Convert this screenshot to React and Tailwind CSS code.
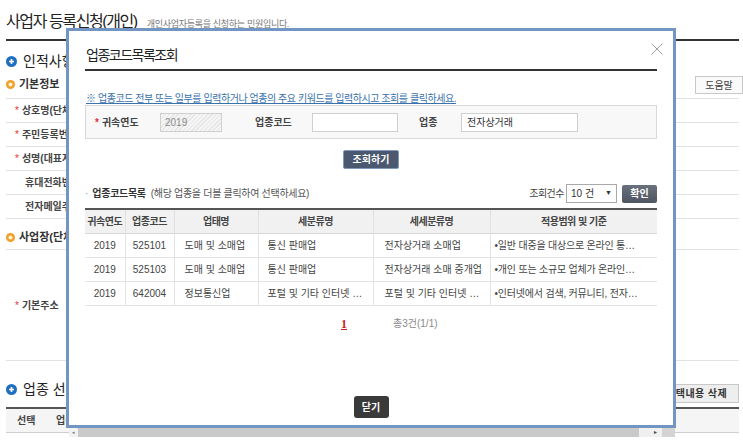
import React from 'react';

const results = [
  { year: '2019', code: '525101', biz: '도매 및 소매업', sub: '통신 판매업', subsub: '전자상거래 소매업', scope: '•일반 대중을 대상으로 온라인 통…' },
  { year: '2019', code: '525103', biz: '도매 및 소매업', sub: '통신 판매업', subsub: '전자상거래 소매 중개업', scope: '•개인 또는 소규모 업체가 온라인…' },
  { year: '2019', code: '642004', biz: '정보통신업', sub: '포털 및 기타 인터넷 …', subsub: '포털 및 기타 인터넷 …', scope: '•인터넷에서 검색, 커뮤니티, 전자…' },
];

const basicRows = [
  { label: '상호명(단체명)', required: true },
  { label: '주민등록번호', required: true },
  { label: '성명(대표자)', required: true },
  { label: '휴대전화번호' },
  { label: '전자메일주소' },
];

const BlueDot = () => (
  <svg width="11" height="11" viewBox="0 0 11 11" className="shrink-0">
    <circle cx="5.5" cy="5.5" r="5.5" fill="#1f6fc1" />
    <path d="M5.5 3v5M3 5.5h5" stroke="#fff" strokeWidth="1.6" />
  </svg>
);

const OrangeDot = () => (
  <svg width="9" height="9" viewBox="0 0 9 9" className="shrink-0">
    <circle cx="4.5" cy="4.5" r="4.5" fill="#f0a02a" />
    <circle cx="4.5" cy="4.5" r="2" fill="#fff1d2" />
  </svg>
);

const Star = () => <span className="text-[#e03434] text-[10px] mr-[3px]">*</span>;

export default function App() {
  return (
    <div className="relative w-[743px] h-[446px] overflow-hidden bg-white text-[#333] font-['Liberation_Sans','Noto_Sans_CJK_KR',sans-serif]">
      {/* background page */}
      <div className="ml-[6px] w-[733px]">
        <div className="h-[41px] border-b-2 border-[#333] flex items-baseline gap-[10px] pt-[12px]">
          <span className="text-[16px] leading-[20px] tracking-[-1.4px] text-[#222]">사업자 등록신청(개인)</span>
          <span className="text-[9px] tracking-[-0.3px] text-[#777]">개인사업자등록을 신청하는 민원입니다.</span>
        </div>

        <div className="h-[35px] pt-[12px] flex items-start gap-[6px]">
          <div className="h-[16px] flex items-center"><BlueDot /></div>
          <span className="text-[14px] leading-[16px] text-[#222]">인적사항</span>
        </div>

        <div className="h-[22px] flex justify-between items-start">
          <div className="h-[16px] flex items-center gap-[4px]">
            <OrangeDot />
            <span className="text-[11px] font-bold text-[#333]">기본정보</span>
          </div>
          <div className="h-[18px] w-[48px] mr-[-4px] border border-[#c8c8c8] bg-[#fafafa] flex items-center justify-center text-[10px] text-[#444]">
            도움말
          </div>
        </div>

        <div className="border-t border-[#e2e2e2]">
          {basicRows.map((r) => (
            <div key={r.label} className="h-[24px] border-b border-[#e2e2e2] flex items-center pl-[9px]">
              {r.required ? <Star /> : <span className="w-[10px]" />}
              <span className="text-[10px] font-bold text-[#444]">{r.label}</span>
            </div>
          ))}
        </div>

        <div className="h-[30px] pt-[11px] flex items-start gap-[4px]">
          <div className="h-[14px] flex items-center"><OrangeDot /></div>
          <span className="text-[11px] leading-[14px] font-bold text-[#333]">사업장(단체)정보</span>
        </div>

        <div className="h-[112px] border-t border-b border-[#e2e2e2] flex items-center pl-[9px]">
          <Star />
          <span className="text-[10px] font-bold text-[#444]">기본주소</span>
        </div>

        <div className="h-[46px] flex justify-between items-end pb-[4px]">
          <div className="mb-[6px] flex items-center gap-[6px]">
            <BlueDot />
            <span className="text-[14px] leading-[16px] text-[#222]">업종 선택</span>
          </div>
          <div className="h-[19px] w-[90px] pr-[11px] border border-[#c8c8c8] bg-[#eeeeee] flex items-center justify-end text-[10px] font-bold tracking-[0.4px] text-[#333]">
            선택내용 삭제
          </div>
        </div>

        <div className="h-[26px] border-t-2 border-b border-t-[#555] border-b-[#cfcfcf] bg-[#f5f5f5] flex items-center text-[10px] font-bold text-[#444]">
          <span className="pl-[11px] w-[50px]">선택</span>
          <span>업종코드</span>
        </div>
      </div>

      {/* modal */}
      <div className="absolute left-[66px] top-[28px] w-[610px] h-[400px] border-[3px] border-[#7295c4] bg-white px-[16px] flex flex-col">
        <div className="h-[40px] border-b-2 border-[#333] flex items-end pb-[6px] pl-[1px]">
          <span className="text-[14px] leading-[16px] tracking-[-1.5px] text-[#222]">업종코드목록조회</span>
        </div>
        <svg width="12" height="12" viewBox="0 0 12 12" className="absolute right-[10px] top-[12px]">
          <path d="M0.5 0.5l11 11M11.5 0.5l-11 11" stroke="#a0a0a0" strokeWidth="1" />
        </svg>

        <p className="mt-[22px] text-[10px] leading-[12px] tracking-[-0.45px] text-[#3a72ad] underline pl-[1px]">
          ※ 업종코드 전부 또는 일부를 입력하거나 업종의 주요 키워드를 입력하시고 조회를 클릭하세요.
        </p>

        <div className="h-[34px] border border-[#d8d8d8] bg-[#f8f8f8] flex items-center pl-[9px] text-[10px] font-bold text-[#444]">
          <div className="w-[65px] flex items-center">
            <Star />
            <span>귀속연도</span>
          </div>
          <div className="w-[62px] h-[19px] border border-[#cfcfcf] bg-[repeating-linear-gradient(135deg,#e6e6e6_0px,#e6e6e6_1px,#f5f5f5_1px,#f5f5f5_3px)] flex items-center pl-[4px] text-[10px] font-normal text-[#8a8a8a]">
            2019
          </div>
          <div className="w-[90px] pl-[33px]">업종코드</div>
          <div className="w-[86px] h-[19px] border border-[#cfcfcf] bg-white" />
          <div className="w-[63px] pl-[21px]">업종</div>
          <div className="w-[117px] h-[19px] border border-[#cfcfcf] bg-white flex items-center pl-[5px] font-normal text-[#333]">
            전자상거래
          </div>
        </div>

        <div className="mt-[11px] self-center w-[56px] h-[19px] bg-[#4a5870] border border-[#8199bd] rounded-[2px] flex items-center justify-center text-[10px] font-bold text-white">
          조회하기
        </div>

        <div className="mt-[15px] h-[19px] flex justify-between items-center">
          <div className="flex items-center text-[10px]">
            <span className="text-[#999] mr-[4px]">·</span>
            <span className="font-bold text-[#333] tracking-[-0.3px]">업종코드목록</span>
            <span className="ml-[5px] text-[#555] tracking-[-0.3px]">(해당 업종을 더블 클릭하여 선택하세요)</span>
          </div>
          <div className="flex items-center text-[10px] text-[#444]">
            <span className="tracking-[-0.5px]">조회건수</span>
            <div className="ml-[2px] w-[51px] h-[19px] border border-[#a9a9a9] bg-white flex items-center justify-between px-[4px] text-[10px] text-[#333]">
              <span>10 건</span>
              <span className="text-[7px]">▼</span>
            </div>
            <div className="ml-[5px] w-[35px] h-[18px] rounded-[2px] bg-[linear-gradient(#6a717c,#4f5661)] flex items-center justify-center font-bold text-white">
              확인
            </div>
          </div>
        </div>

        <table className="mt-[5px] w-[572px] table-fixed border-collapse text-[10px]">
          <colgroup>
            <col className="w-[40px]" />
            <col className="w-[49px]" />
            <col className="w-[84px]" />
            <col className="w-[115px]" />
            <col className="w-[117px]" />
            <col className="w-[167px]" />
          </colgroup>
          <thead>
            <tr className="h-[24px] bg-[#f1f1f1] border-t-2 border-t-[#555] border-b border-b-[#d8d8d8]">
              {['귀속연도', '업종코드', '업태명', '세분류명', '세세분류명', '적용범위 및 기준'].map((h, i) => (
                <th key={h} className={`font-bold text-[#444] tracking-[-0.5px] whitespace-nowrap p-0 ${i < 5 ? 'border-r border-[#e0e0e0]' : ''}`}>
                  {h}
                </th>
              ))}
            </tr>
          </thead>
          <tbody>
            {results.map((r) => (
              <tr key={r.code} className="h-[24px] border-b border-[#e3e3e3] text-[#444]">
                <td className="text-center border-r border-[#e3e3e3] p-0">{r.year}</td>
                <td className="text-center border-r border-[#e3e3e3] p-0">{r.code}</td>
                <td className="pl-[10px] border-r border-[#e3e3e3] whitespace-nowrap overflow-hidden">{r.biz}</td>
                <td className="pl-[9px] border-r border-[#e3e3e3] whitespace-nowrap overflow-hidden">{r.sub}</td>
                <td className="pl-[11px] border-r border-[#e3e3e3] whitespace-nowrap overflow-hidden">{r.subsub}</td>
                <td className="pl-[4px] whitespace-nowrap overflow-hidden tracking-[-0.2px]">{r.scope}</td>
              </tr>
            ))}
          </tbody>
        </table>

        <div className="mt-[10px] h-[16px] flex items-center pl-[256px]">
          <span className="font-['Liberation_Serif',serif] text-[12px] font-bold text-[#cc1f1f] underline">1</span>
          <span className="ml-[46px] text-[10px] text-[#8a8a8a]">총3건(1/1)</span>
        </div>

        <div className="mt-auto mb-[7px] self-center w-[35px] h-[22px] rounded-[3px] bg-[#3a3a3a] flex items-center justify-center text-[10px] font-bold text-white">
          닫기
        </div>
      </div>

      {/* horizontal scrollbar under the modal */}
      <div className="absolute left-[69px] top-[428px] w-[606px] h-[9px] flex bg-[#e8e8e8]">
        <div className="w-[9px] bg-[#f2f2f2] flex items-center justify-center text-[5px] text-[#777]">◂</div>
        <div className="w-[561px] bg-[#c9c9c9]" />
        <div className="w-[23px] bg-[#f0f0f0] flex items-center justify-end pr-[5px] text-[6px] text-[#444]">▸</div>
        <div className="flex-1 bg-[#d4d4d4]" />
      </div>
    </div>
  );
}
